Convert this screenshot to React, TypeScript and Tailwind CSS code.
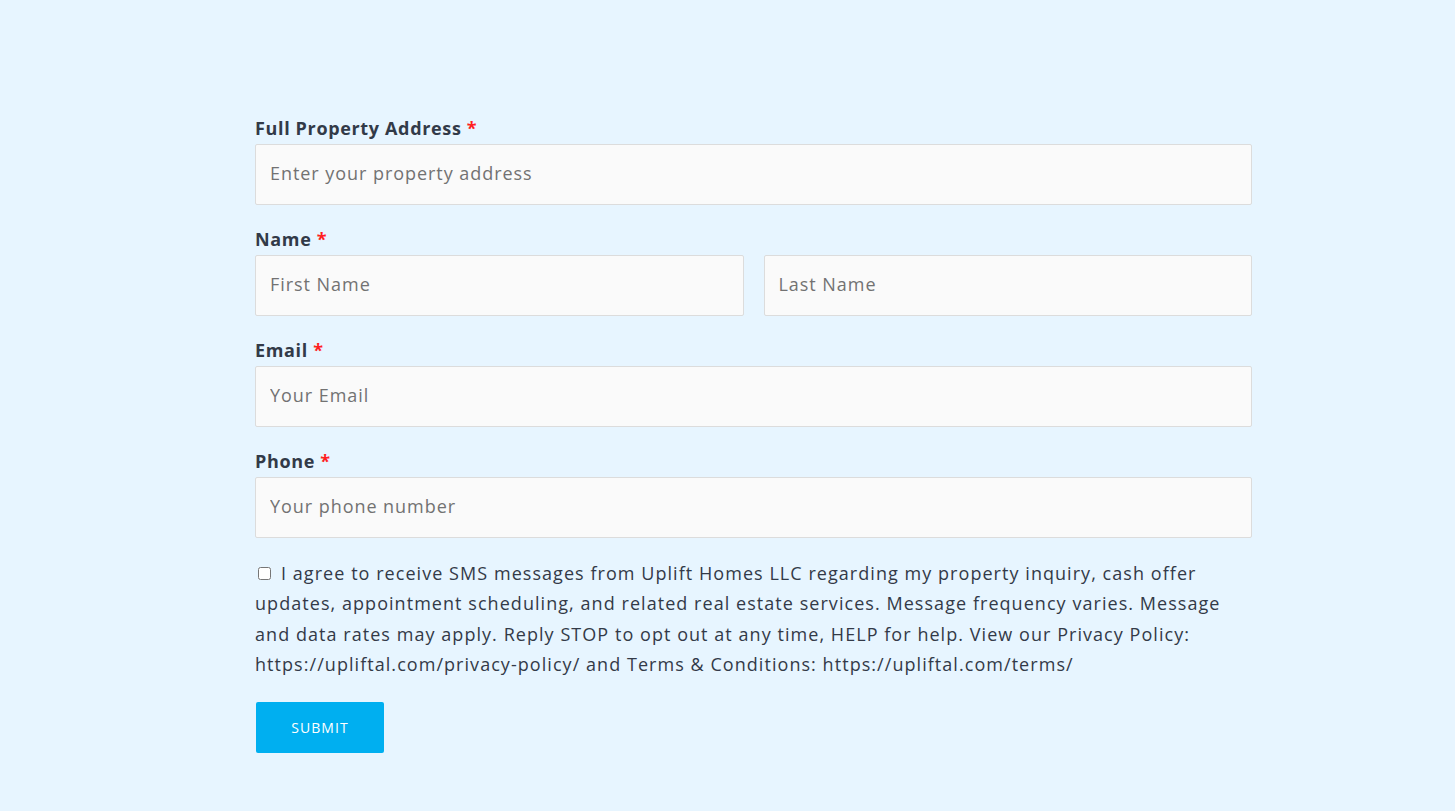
import React from "react";

const font = { fontFamily: '"Open Sans", "Noto Sans", sans-serif' };

function Label({ children }: { children: React.ReactNode }) {
  return (
    <label className="block text-[18px] leading-[27px] font-bold tracking-[0.65px] text-[#323a48] mb-[2px]">
      {children} <span className="text-[#ff1f1f]">*</span>
    </label>
  );
}

function Field({ placeholder }: { placeholder: string }) {
  return (
    <input
      type="text"
      placeholder={placeholder}
      className="block w-full h-[61px] bg-[#fafafa] border border-[#dcdcdc] rounded-[2px] px-[14px] pb-[3px] text-[18px] tracking-[0.95px] text-[#333] placeholder:text-[#727272] outline-none"
    />
  );
}

export default function App() {
  return (
    <div className="min-h-[811px] w-full bg-[#e7f5ff]" style={font}>
      <div className="w-[997px] ml-[255px] pt-[115px]">
        <div className="mb-[21px]">
          <Label>Full Property Address</Label>
          <Field placeholder="Enter your property address" />
        </div>
        <div className="mb-[21px]">
          <Label>Name</Label>
          <div className="flex gap-[20px]">
            <Field placeholder="First Name" />
            <Field placeholder="Last Name" />
          </div>
        </div>
        <div className="mb-[21px]">
          <Label>Email</Label>
          <Field placeholder="Your Email" />
        </div>
        <div className="mb-[20px]">
          <Label>Phone</Label>
          <Field placeholder="Your phone number" />
        </div>
        <p className="text-[18px] leading-[30.4px] tracking-[1.05px] text-[#333a48] whitespace-nowrap">
          <input type="checkbox" className="w-[13px] h-[13px] ml-[3px] mr-[10px] align-[0px]" />
          I agree to receive SMS messages from Uplift Homes LLC regarding my property inquiry, cash offer
          <br />
          updates, appointment scheduling, and related real estate services. Message frequency varies. Message
          <br />
          and data rates may apply. Reply STOP to opt out at any time, HELP for help. View our Privacy Policy:
          <br />
          https://upliftal.com/privacy-policy/ and Terms &amp; Conditions: https://upliftal.com/terms/
        </p>
        <button className="mt-[22px] ml-[1px] w-[128px] h-[51px] bg-[#00aff0] text-white text-[14px] font-medium tracking-[1.1px] rounded-[2px]">
          SUBMIT
        </button>
      </div>
    </div>
  );
}
